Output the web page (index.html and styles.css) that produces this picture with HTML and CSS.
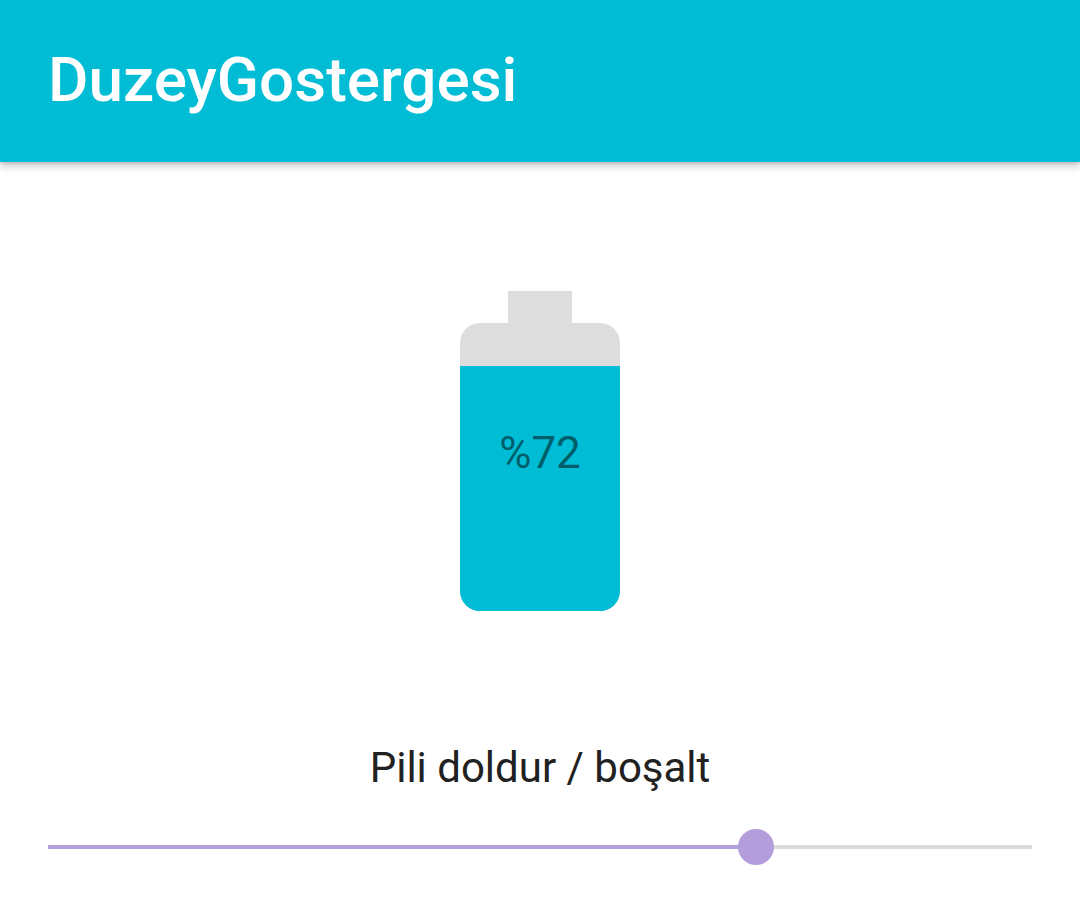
FILE: index.html
```html
<!DOCTYPE html>
<html lang="tr">
<head>
<meta charset="utf-8">
<title>DuzeyGostergesi</title>
<link rel="stylesheet" href="styles.css">
</head>
<body>
<header class="appbar">
  <h1 class="title">DuzeyGostergesi</h1>
</header>
<main class="content">
  <div class="battery">
    <div class="battery-cap"></div>
    <div class="battery-body">
      <div class="battery-empty"></div>
      <div class="battery-fill">
        <span class="battery-label">%72</span>
      </div>
    </div>
  </div>
  <p class="caption">Pili doldur / boşalt</p>
  <div class="slider">
    <div class="slider-track">
      <div class="slider-active" style="width:72%"></div>
      <div class="slider-thumb" style="left:72%"></div>
    </div>
  </div>
</main>
</body>
</html>
```
FILE: styles.css
```css
* { box-sizing: border-box; }
html, body { margin: 0; padding: 0; background: #ffffff; }
body {
  font-family: Roboto, "Noto Sans", sans-serif;
  width: 1080px;
  height: 914px;
  overflow: hidden;
}
.appbar {
  height: 162px;
  background: #00BCD4;
  display: flex;
  align-items: center;
  padding-left: 48px;
  box-shadow: 0 4px 8px rgba(0,0,0,0.22), 0 1px 3px rgba(0,0,0,0.12);
  position: relative;
  z-index: 1;
}
.title {
  margin: 0;
  color: #ffffff;
  font-size: 62px;
  font-weight: 500;
  line-height: 1;
  padding-bottom: 2px;
}
.content {
  display: flex;
  flex-direction: column;
  align-items: center;
  padding-top: 129px;
}
.battery {
  display: flex;
  flex-direction: column;
  align-items: center;
}
.battery-cap {
  width: 64px;
  height: 32px;
  background: #DDDDDD;
}
.battery-body {
  width: 160px;
  height: 288px;
  border-radius: 20px;
  overflow: hidden;
  display: flex;
  flex-direction: column;
  background: #DDDDDD;
}
.battery-empty {
  height: 43px;
  flex: none;
}
.battery-fill {
  flex: 1;
  background: #00BCD4;
  display: flex;
  justify-content: center;
  padding-top: 61px;
}
.battery-label {
  font-size: 44px;
  line-height: 52px;
  height: 52px;
  color: rgba(0,0,0,0.5);
}
.caption {
  margin: 131px 0 0;
  font-size: 42px;
  line-height: 52px;
  color: #212121;
}
.slider {
  width: 984px;
  margin-top: 33px;
  height: 40px;
  display: flex;
  align-items: center;
}
.slider-track {
  position: relative;
  width: 100%;
  height: 4px;
  background: #DADADA;
}
.slider-active {
  height: 100%;
  background: #B39DDB;
}
.slider-thumb {
  position: absolute;
  top: 50%;
  width: 36px;
  height: 36px;
  margin-left: -18px;
  margin-top: -18px;
  border-radius: 50%;
  background: #B39DDB;
}
```
